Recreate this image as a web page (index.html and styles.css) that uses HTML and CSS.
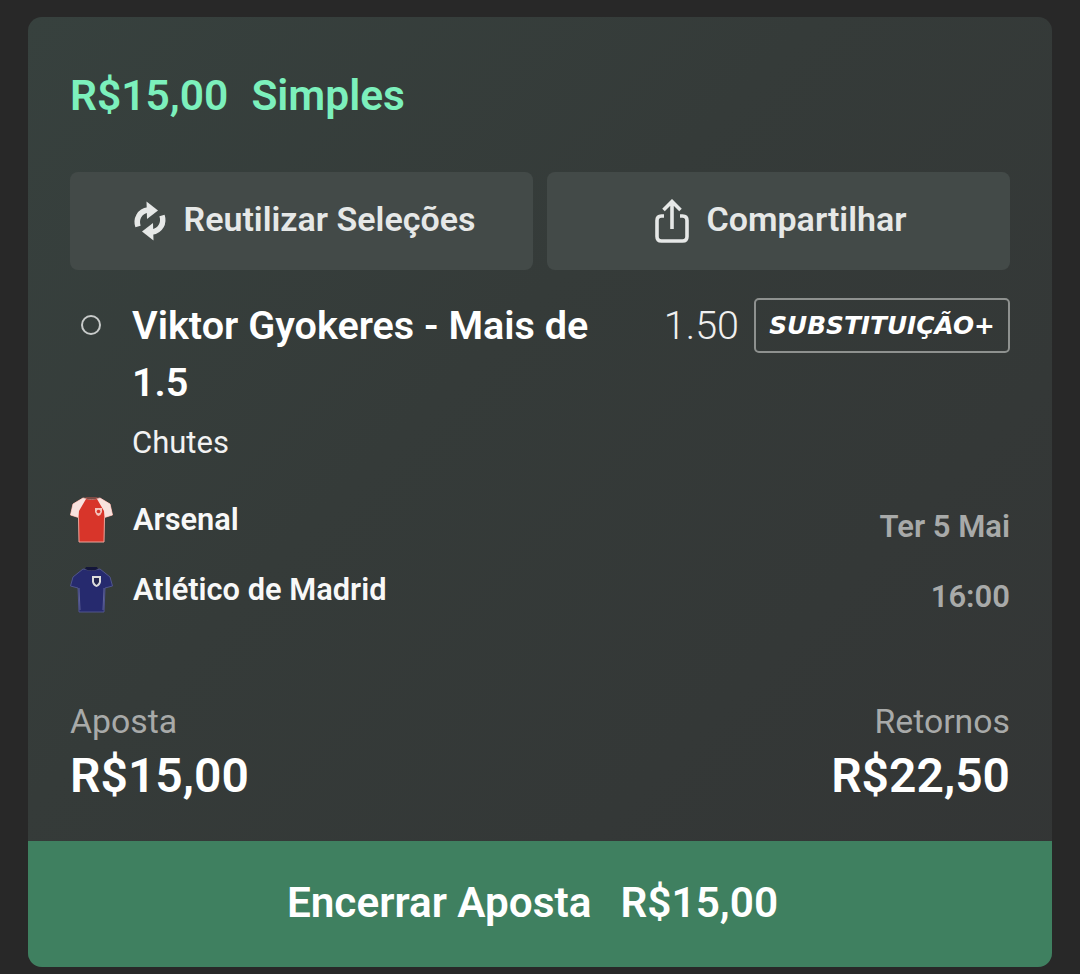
FILE: index.html
```html
<!DOCTYPE html>
<html lang="pt">
<head>
<meta charset="utf-8">
<title>Aposta</title>
<link rel="stylesheet" href="styles.css">
</head>
<body>
<main class="card">
  <div class="content">
    <h1 class="title"><span>R$15,00</span><span>Simples</span></h1>
    <div class="actions">
      <button class="action">
        <svg class="icon" width="34" height="42" viewBox="0 0 34 42" fill="none">
          <path d="M5 26.500C2.500 19 6.500 11 15 10" stroke="#e6e8e7" stroke-width="5.500"/>
          <path d="M13.500 1.500L25 10.500L14 19Z" fill="#e6e8e7"/>
          <path d="M29 15.500C31.500 23 27.500 31 19 32" stroke="#e6e8e7" stroke-width="5.500"/>
          <path d="M20.500 40.500L9 31.500L20 23Z" fill="#e6e8e7"/>
        </svg>
        <span>Reutilizar Seleções</span>
      </button>
      <button class="action">
        <svg class="icon" width="34" height="44" viewBox="0 0 34 44" fill="none" stroke="#e6e8e7" stroke-width="3.600">
          <path d="M9 17H6.500Q2 17 2 21.500V37.500Q2 42 6.500 42H27.500Q32 42 32 37.500V21.500Q32 17 27.500 17H25"/>
          <path d="M17 30V3M8.500 11L17 2.500L25.500 11"/>
        </svg>
        <span>Compartilhar</span>
      </button>
    </div>
    <section class="selection">
      <span class="radio"></span>
      <div class="pick">
        <div class="pick-name">Viktor Gyokeres - Mais de 1.5</div>
        <div class="pick-market">Chutes</div>
      </div>
      <div class="odds">1.50</div>
      <div class="badge">SUBSTITUIÇÃO+</div>
    </section>
    <section class="match">
      <div class="team-list">
        <div class="team">
          <svg class="kit" width="44" height="48" viewBox="0 0 44 48">
            <path d="M13 2L3 8L0.500 19L8.500 21.500L9 46H34L34.500 21.500L42.500 19L40 8L30 2Q21.500 5 13 2Z" fill="#d8352a" stroke="#eba59b" stroke-width="1"/>
            <path d="M13 2L3 8L0.500 19L8.500 21.500L9 15L16 3Z" fill="#f8e2de"/>
            <path d="M30 2L40 8L42.500 19L34.500 21.500L34 15L27 3Z" fill="#f8e2de"/>
            <path d="M15 2Q21.500 5 28 2L27 1H16Z" fill="#7d4a44"/>
            <path d="M25 12H32V16Q31 19 28.500 20Q26 19 25 16Z" fill="#f3c4bd"/>
            <circle cx="28.500" cy="15.500" r="1.800" fill="#d8352a"/>
          </svg>
          <span>Arsenal</span>
        </div>
        <div class="team">
          <svg class="kit" width="44" height="48" viewBox="0 0 44 48">
            <path d="M13 3L3 11L0.500 20L8 22L9 46H34L35 22L42.500 20L40 11L30 3Q21.500 6 13 3Z" fill="#262a6e" stroke="#50558c" stroke-width="1"/>
            <path d="M15 3Q21.500 6 28 3L27 1H16Z" fill="#14163a"/>
            <path d="M9 22L10 44M34 22L33 44" stroke="#5e6298" stroke-width="1" fill="none"/>
            <path d="M22 10H31V16Q30 20 26.500 21Q23 20 22 16Z" fill="#dcdcdc"/>
            <path d="M24 12H29V16Q28 18 26.500 19Q25 18 24 16Z" fill="#23264f"/>
          </svg>
          <span>Atlético de Madrid</span>
        </div>
      </div>
      <div class="kickoff">
        <div>Ter 5 Mai</div>
        <div>16:00</div>
      </div>
    </section>
    <section class="totals">
      <div>
        <div class="total-label">Aposta</div>
        <div class="total-value">R$15,00</div>
      </div>
      <div class="total-right">
        <div class="total-label">Retornos</div>
        <div class="total-value">R$22,50</div>
      </div>
    </section>
  </div>
  <button class="cashout"><span>Encerrar Aposta</span><span>R$15,00</span></button>
</main>
</body>
</html>
```
FILE: styles.css
```css
* { box-sizing: border-box; }
html, body { margin: 0; height: 974px; overflow: hidden; }
body {
  background: #282828;
  padding: 17px 28px 7px;
  font-family: Roboto, "Noto Sans", sans-serif;
}
.card {
  height: 950px;
  border-radius: 14px;
  overflow: hidden;
  display: flex;
  flex-direction: column;
  background: linear-gradient(135deg, #37413e 0%, #353b39 40%, #333535 100%);
}
.content {
  flex: 1;
  padding: 0 42px;
  display: flex;
  flex-direction: column;
}
.title {
  margin: 55px 0 0;
  height: 48px;
  display: flex;
  gap: 23px;
  font-size: 42.500px;
  line-height: 48px;
  font-weight: 600;
  color: #7cf0bc;
}
.actions {
  margin-top: 52px;
  display: grid;
  grid-template-columns: 1fr 1fr;
  gap: 14px;
}
.action {
  height: 98px;
  padding: 0 0 5px 5px;
  border: 0;
  border-radius: 8px;
  background: #434a48;
  color: #e6e8e7;
  font: 600 34px Roboto, sans-serif;
  display: flex;
  align-items: center;
  justify-content: center;
  gap: 17px;
}
.icon { flex: none; margin-top: 4px; }
.selection {
  margin-top: 28px;
  display: flex;
  align-items: flex-start;
}
.radio {
  flex: none;
  width: 20px;
  height: 20px;
  margin: 17px 31px 0 11px;
  border: 2px solid #c8cbca;
  border-radius: 50%;
}
.pick { width: 480px; margin-top: -1px; }
.pick-name {
  font-size: 39.600px;
  line-height: 57px;
  font-weight: 600;
  color: #fff;
  width: 470px;
}
.pick-market {
  margin-top: 12px;
  font-size: 31px;
  line-height: 40px;
  color: #f2f2f2;
}
.odds {
  margin-left: auto;
  font-size: 39.500px;
  line-height: 55px;
  font-weight: 300;
  color: #f0f0f0;
}
.badge {
  margin-left: 15px;
  width: 256px;
  height: 55px;
  border: 2px solid #8e918f;
  border-radius: 5px;
  display: flex;
  align-items: center;
  justify-content: center;
  font-family: "DejaVu Sans", sans-serif;
  font-size: 24.800px;
  font-weight: 700;
  font-style: italic;
  color: #fff;
}
.match {
  margin-top: 33px;
  display: flex;
  justify-content: space-between;
}
.team-list { display: flex; flex-direction: column; gap: 22px; }
.team {
  display: flex;
  align-items: center;
  gap: 19px;
  height: 48px;
  font-size: 30.800px;
  font-weight: 600;
  color: #f8f8f8;
}
.team span { margin-top: -2px; }
.kit { flex: none; }
.kickoff {
  padding-top: 13px;
  text-align: right;
  font-size: 31px;
  line-height: 36px;
  font-weight: 600;
  color: #a8aaa9;
  display: flex;
  flex-direction: column;
  gap: 34px;
}
.totals {
  margin-top: 87px;
  display: flex;
  justify-content: space-between;
}
.total-right { text-align: right; }
.total-label {
  font-size: 33.800px;
  line-height: 40px;
  color: #a8aaa9;
}
.total-value {
  margin-top: 6px;
  font-size: 48px;
  line-height: 56px;
  font-weight: 600;
  color: #fff;
}
.cashout {
  height: 126px;
  flex: none;
  padding: 0 15px 3px 0;
  border: 0;
  background: #3f8060;
  color: #fff;
  font: 600 42.300px Roboto, sans-serif;
  display: flex;
  align-items: center;
  justify-content: center;
  gap: 29px;
}
```
